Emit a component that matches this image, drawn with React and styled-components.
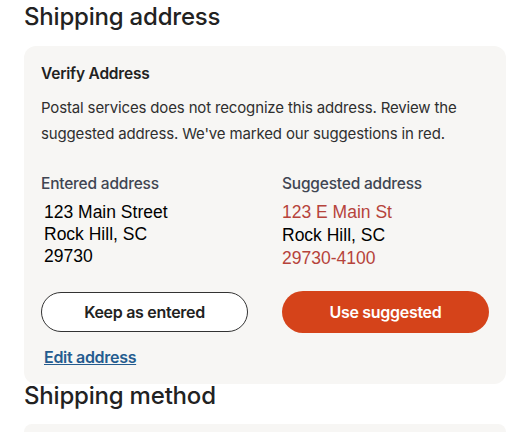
import React from 'react';
import styled, { createGlobalStyle } from 'styled-components';

const GlobalStyle = createGlobalStyle`
  body {
    margin: 0;
    background: #ffffff;
    font-family: Inter, "Noto Sans", sans-serif;
    color: #222222;
  }
`;

const Page = styled.div`
  padding: 5px 7px 0 24px;
`;

const SectionTitle = styled.h2`
  margin: 0;
  font-size: 24px;
  font-weight: 500;
  line-height: 24px;
  color: #222222;
  letter-spacing: -0.2px;
`;

const Card = styled.div`
  background: #f7f6f4;
  border-radius: 12px;
  margin-top: ${p => p.$top || 16}px;
  padding: ${p => p.$empty ? '8px' : '16px 17px 16px 17px'};
`;

const CardTitle = styled.h3`
  margin: 0;
  font-size: 15.5px;
  font-weight: 600;
  line-height: 24px;
  color: #222222;
  letter-spacing: -0.2px;
`;

const Notice = styled.p`
  margin: 9px 0 0;
  font-size: 15px;
  line-height: 26px;
  color: #2f2f2f;
  letter-spacing: -0.15px;
`;

const Columns = styled.div`
  display: grid;
  grid-template-columns: 1fr 1fr;
  column-gap: 34px;
  margin-top: 26px;
`;

const Column = styled.div`
  display: flex;
  flex-direction: column;
`;

const Label = styled.div`
  font-size: 15.5px;
  font-weight: 500;
  line-height: 22px;
  color: #404552;
  letter-spacing: -0.2px;
`;

const Address = styled.div`
  margin-top: 6px;
  padding-left: ${p => p.$indent || 0}px;
  font-family: "Liberation Sans", Arial, sans-serif;
  font-size: 17.5px;
  line-height: ${p => p.$lh || 22}px;
  color: #000000;
`;

const Line = styled.div`
  color: ${p => (p.$changed ? '#b6433b' : '#000000')};
`;

const Actions = styled.div`
  display: grid;
  grid-template-columns: 1fr 1fr;
  column-gap: 34px;
  align-items: center;
  margin-top: 21px;
`;

const Button = styled.button`
  font-family: Inter, "Noto Sans", sans-serif;
  font-size: 16px;
  font-weight: 600;
  border-radius: 999px;
  cursor: pointer;
  letter-spacing: -0.3px;
  ${p => p.$primary ? `
    height: 42px;
    background: #d5431a;
    color: #ffffff;
    border: none;
  ` : `
    height: 40px;
    background: #ffffff;
    color: #222222;
    border: 1px solid #333333;
  `}
`;

const EditLink = styled.a`
  display: inline-block;
  margin-top: 13px;
  margin-left: 3px;
  font-size: 16px;
  font-weight: 600;
  line-height: 22px;
  color: #255c8f;
  text-decoration: underline;
  letter-spacing: -0.3px;
  cursor: pointer;
`;

export default function App() {
  return (
    <Page>
      <GlobalStyle />
      <SectionTitle>Shipping address</SectionTitle>
      <Card $top={17}>
        <CardTitle>Verify Address</CardTitle>
        <Notice>
          Postal services does not recognize this address. Review the suggested address. We've marked our suggestions in red.
        </Notice>
        <Columns>
          <Column>
            <Label>Entered address</Label>
            <Address $indent={3}>
              <Line>123 Main Street</Line>
              <Line>Rock Hill, SC</Line>
              <Line>29730</Line>
            </Address>
          </Column>
          <Column>
            <Label>Suggested address</Label>
            <Address $lh={23}>
              <Line $changed>123 E Main St</Line>
              <Line>Rock Hill, SC</Line>
              <Line $changed>29730-4100</Line>
            </Address>
          </Column>
        </Columns>
        <Actions>
          <Button>Keep as entered</Button>
          <Button $primary>Use suggested</Button>
        </Actions>
        <EditLink>Edit address</EditLink>
      </Card>
      <SectionTitle>Shipping method</SectionTitle>
      <Card $top={16} $empty />
    </Page>
  );
}
